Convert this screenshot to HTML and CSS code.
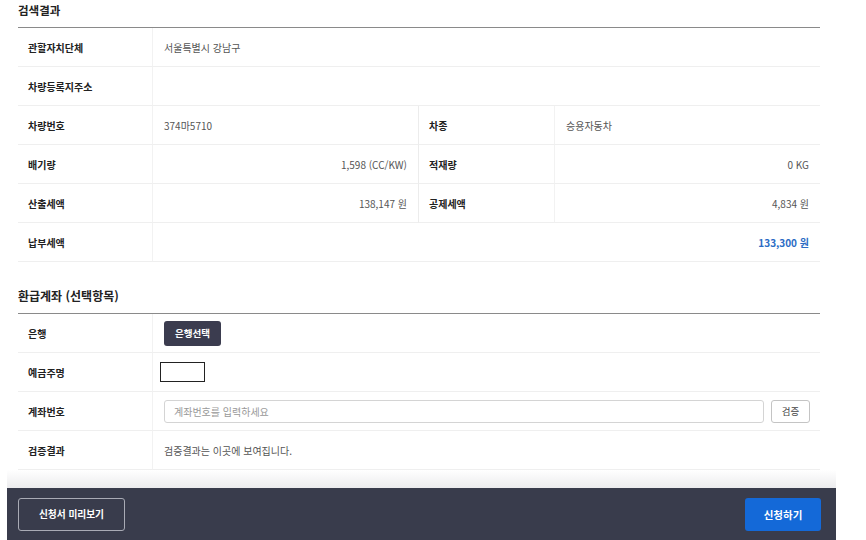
FILE: index.html
```html
<!DOCTYPE html>
<html lang="ko">
<head>
<meta charset="utf-8">
<link rel="stylesheet" href="styles.css">
</head>
<body>
<div class="page">
  <h2 class="sec-title first">검색결과</h2>
  <div class="grid">
    <div class="lbl">관할자치단체</div>
    <div class="val span3">서울특별시 강남구</div>

    <div class="lbl">차량등록지주소</div>
    <div class="val span3"></div>

    <div class="lbl">차량번호</div>
    <div class="val">374마5710</div>
    <div class="lbl lbl2">차종</div>
    <div class="val">승용자동차</div>

    <div class="lbl">배기량</div>
    <div class="val right">1,598 (CC/KW)</div>
    <div class="lbl lbl2">적재량</div>
    <div class="val right">0 KG</div>

    <div class="lbl">산출세액</div>
    <div class="val right">138,147 원</div>
    <div class="lbl lbl2">공제세액</div>
    <div class="val right">4,834 원</div>

    <div class="lbl">납부세액</div>
    <div class="val span3 right total">133,300 원</div>
  </div>

  <h2 class="sec-title second">환급계좌 (선택항목)</h2>
  <div class="grid grid2">
    <div class="lbl">은행</div>
    <div class="val"><button class="bank-btn" type="button">은행선택</button></div>

    <div class="lbl">예금주명</div>
    <div class="val"><span class="owner-box"></span></div>

    <div class="lbl">계좌번호</div>
    <div class="val acct">
      <input class="acct-input" type="text" placeholder="계좌번호를 입력하세요">
      <button class="verify-btn" type="button">검증</button>
    </div>

    <div class="lbl">검증결과</div>
    <div class="val">검증결과는 이곳에 보여집니다.</div>
  </div>
</div>
<div class="shade"></div>
<div class="footer">
  <button class="preview-btn" type="button">신청서 미리보기</button>
  <button class="submit-btn" type="button">신청하기</button>
</div>
</body>
</html>
```

FILE: styles.css
```css
html, body {
  margin: 0;
  padding: 0;
  background: #fff;
  font-family: "Noto Sans CJK KR", "Noto Sans", sans-serif;
  color: #222;
}

.page {
  padding: 0 46px 0 18px;
}

.sec-title {
  margin: 0;
  font-size: 11.5px;
  font-weight: 700;
  line-height: 20px;
  height: 20px;
  padding-bottom: 7px;
  color: #222;
}

.sec-title.second {
  margin-top: 24px;
  font-size: 12px;
}

.grid {
  display: grid;
  grid-template-columns: 135px 1fr 137px 1fr;
  border-top: 1px solid #8a8a8a;
}

.grid2 {
  grid-template-columns: 135px 1fr;
}

.lbl, .val {
  height: 38px;
  border-bottom: 1px solid #efefef;
  display: flex;
  align-items: center;
  font-size: 10px;
  box-sizing: content-box;
}

.lbl {
  padding: 0 10px;
  font-weight: 700;
  color: #222;
  border-right: 1px solid #f2f2f2;
}

.lbl2 {
  border-left: 1px solid #ececec;
}

.val {
  padding: 0 11px;
  color: #555;
}

.span3 {
  grid-column: span 3;
}

.right {
  justify-content: flex-end;
}

.total {
  color: #2b6cc4;
  font-weight: 700;
}

.bank-btn {
  font-family: inherit;
  font-size: 9.5px;
  font-weight: 700;
  color: #fff;
  background: #3b3c4f;
  border: none;
  border-radius: 3px;
  width: 57px;
  height: 25px;
  padding: 0;
}

.owner-box {
  display: block;
  width: 43px;
  height: 18px;
  border: 1px solid #222;
  background: #fff;
  margin-left: -4px;
}

.acct {
  gap: 7px;
}

.acct-input {
  flex: 1;
  height: 23px;
  box-sizing: border-box;
  border: 1px solid #d4d4d4;
  border-radius: 3px;
  padding: 0 9px;
  font-family: inherit;
  font-size: 10px;
  color: #555;
  outline: none;
}

.acct-input::placeholder {
  color: #999;
}

.verify-btn {
  width: 39px;
  height: 23px;
  box-sizing: border-box;
  border: 1px solid #c4c4c4;
  border-radius: 3px;
  background: #fff;
  font-family: inherit;
  font-size: 9.5px;
  color: #444;
  padding: 0;
  margin-right: -1px;
}

.shade {
  height: 18px;
  margin: 0 30px 0 7px;
  background: linear-gradient(to bottom, #ffffff, #ececee);
}

.footer {
  margin: 0 30px 0 7px;
  height: 52px;
  background: #393c4c;
  display: flex;
  align-items: center;
  justify-content: space-between;
  padding: 0 15px 0 11px;
}

.preview-btn {
  width: 107px;
  height: 33px;
  box-sizing: border-box;
  border: 1px solid #a9abb5;
  border-radius: 3px;
  background: transparent;
  color: #fff;
  font-family: inherit;
  font-size: 9.7px;
  font-weight: 700;
  padding: 0;
}

.submit-btn {
  width: 76px;
  height: 33px;
  border: none;
  border-radius: 3px;
  background: #1469d8;
  color: #fff;
  font-family: inherit;
  font-size: 10.5px;
  font-weight: 700;
  padding: 0;
}
```
